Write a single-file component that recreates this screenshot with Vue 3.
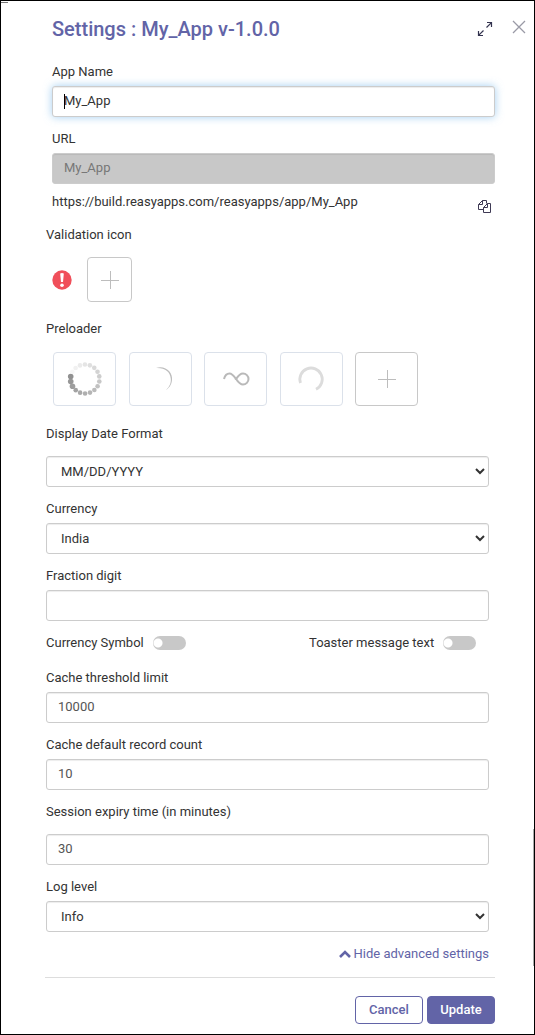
<script setup>
import { ref } from 'vue'

const appName = ref('My_App')
const dateFormat = ref('MM/DD/YYYY')
const currency = ref('India')
const fraction = ref('')
const showSymbol = ref(false)
const toaster = ref(false)
const threshold = ref('10000')
const recordCount = ref('10')
const expiry = ref('30')
const logLevel = ref('Info')

const dots = Array.from({ length: 18 }, (_, i) => {
  const angle = Math.PI + 0.17 - (i * 2 * Math.PI) / 18
  return {
    x: 16 + 14.5 * Math.cos(angle),
    y: 16 + 14.5 * Math.sin(angle),
    r: i < 3 ? 2.8 : 2.3,
    shade: `rgb(${Array(3).fill(Math.round(145 + i * 6)).join(',')})`,
  }
})
</script>

<template>
  <main class="dialog">
    <span class="edge-mark" aria-hidden="true"></span>
    <span class="scroll-mark" aria-hidden="true"></span>
    <header class="head">
      <h1>Settings : My_App v-1.0.0</h1>
      <button type="button" class="icon-btn expand" aria-label="Expand">
        <svg width="16" height="16" viewBox="0 0 16 16" fill="none" stroke="#33334f" stroke-width="1.2">
          <path d="M10 1.5h4.5V6M14.2 1.8 9.500 6.500M1.5 10v4.500H6M1.8 14.2 6.500 9.500" />
        </svg>
      </button>
      <button type="button" class="icon-btn close" aria-label="Close">
        <svg width="14" height="14" viewBox="0 0 14 14" fill="none" stroke="#9a9aa6" stroke-width="1.3">
          <path d="M1 1l12 12M13 1 1 13" />
        </svg>
      </button>
    </header>

    <form class="body" @submit.prevent>
      <section class="identity">
        <div class="field">
          <label for="name">App Name</label>
          <div class="caret-box">
            <input id="name" v-model="appName" class="control active" type="text" />
          </div>
        </div>
        <div class="field">
          <label for="url">URL</label>
          <input id="url" class="control" type="text" value="My_App" disabled />
        </div>
        <div class="link-row">
          <span>https://build.reasyapps.com/reasyapps/app/My_App</span>
          <button type="button" class="icon-btn" aria-label="Copy URL">
            <svg width="14" height="14" viewBox="0 0 14 14" fill="none" stroke="#3f3a55" stroke-width="1">
              <path d="M5.5 9.5h-5v-5l4-4h4v3M4.5 .5v4h-4M5.5 7.5v5h7v-9h-3l-4 4h4v-4" />
            </svg>
          </button>
        </div>
      </section>

      <section class="advanced">
        <div class="group-label">Validation icon</div>
        <div class="validation">
          <svg width="20" height="20" viewBox="0 0 20 20">
            <circle cx="10" cy="10" r="9.7" fill="#f04f5a" />
            <path d="M8.2 3.4Q10 2.6 11.8 3.4L11 12H9z" fill="#fff" />
            <circle cx="10" cy="15.3" r="1.8" fill="#fff" />
          </svg>
          <button type="button" class="tile add small" aria-label="Add validation icon">
            <svg width="18" height="18" viewBox="0 0 18 18" stroke="#bdbdbd"><path d="M9.5 0v18M0 9.5h18" /></svg>
          </button>
        </div>

        <div class="group-label">Preloader</div>
        <div class="loaders">
          <button type="button" class="tile" aria-label="Dots preloader">
            <svg width="36" height="36" viewBox="-2 -2 36 36">
              <circle v-for="(d, i) in dots" :key="i" :cx="d.x" :cy="d.y" :r="d.r" :fill="d.shade" />
            </svg>
          </button>
          <button type="button" class="tile" aria-label="Crescent preloader">
            <svg width="28" height="28" viewBox="0 0 28 28">
              <path d="M10 3C20 0 27 8 26 15C25.5 20 23 23 20 25C24 21 25 18 24.8 14C24.5 7 19 2.5 10 3z" fill="#bdbdbd" />
            </svg>
          </button>
          <button type="button" class="tile" aria-label="Infinity preloader">
            <svg width="28" height="16" viewBox="0 0 28 16" fill="none" stroke="#b9b9b9" stroke-width="2">
              <path d="M2 8C3 4 5 2.5 7.5 2.5C13 2.5 15 13.5 21 13.5A5.500 5.500 0 0 0 21 2.500C17 2.500 15.500 6 13.500 9" />
            </svg>
          </button>
          <button type="button" class="tile" aria-label="Ring preloader">
            <svg width="28" height="28" viewBox="0 0 28 28" fill="none" stroke="#dcdcdc" stroke-width="2.8">
              <path d="M3.5 18A11.2 11.2 0 1 1 19 24.3" />
            </svg>
          </button>
          <button type="button" class="tile add" aria-label="Add preloader">
            <svg width="18" height="18" viewBox="0 0 18 18" stroke="#bdbdbd"><path d="M9.5 0v18M0 9.5h18" /></svg>
          </button>
        </div>

        <div class="field spaced">
          <label for="date">Display Date Format</label>
          <select id="date" v-model="dateFormat" class="control"><option>MM/DD/YYYY</option></select>
        </div>
        <div class="field">
          <label for="currency">Currency</label>
          <select id="currency" v-model="currency" class="control"><option>India</option></select>
        </div>
        <div class="field">
          <label for="fraction">Fraction digit</label>
          <input id="fraction" v-model="fraction" class="control" type="text" />
        </div>
        <div class="switches">
          <label>Currency Symbol <input v-model="showSymbol" type="checkbox" class="switch" /></label>
          <label>Toaster message text <input v-model="toaster" type="checkbox" class="switch" /></label>
        </div>
        <div class="field">
          <label for="threshold">Cache threshold limit</label>
          <input id="threshold" v-model="threshold" class="control" type="text" />
        </div>
        <div class="field">
          <label for="records">Cache default record count</label>
          <input id="records" v-model="recordCount" class="control" type="text" />
        </div>
        <div class="field spaced">
          <label for="expiry">Session expiry time (in minutes)</label>
          <input id="expiry" v-model="expiry" class="control" type="text" />
        </div>
        <div class="field">
          <label for="log">Log level</label>
          <select id="log" v-model="logLevel" class="control"><option>Info</option></select>
        </div>
        <a href="#" class="toggle-link" @click.prevent>
          <svg width="12" height="8" viewBox="0 0 12 8" fill="none" stroke="#6264a7" stroke-width="2.6">
            <path d="M1 7l5-5 5 5" />
          </svg>
          <span>Hide advanced settings</span>
        </a>
      </section>

      <footer class="actions">
        <button type="button" class="btn">Cancel</button>
        <button type="submit" class="btn primary">Update</button>
      </footer>
    </form>
  </main>
</template>

<style>
body {
  background: #fff;
}
</style>

<style scoped>
* {
  box-sizing: border-box;
}
.dialog {
  position: relative;
  min-height: 100vh;
  border: 1px solid #000;
  color: #333;
  font: 13px/20px Roboto, sans-serif;
}
.edge-mark {
  position: absolute;
  top: 1px;
  left: 0;
  width: 7px;
  height: 1px;
  background: #777;
}
.scroll-mark {
  position: absolute;
  right: 0;
  bottom: 68px;
  width: 1px;
  height: 137px;
  background: #aaa;
}
button,
input,
select {
  font: inherit;
  margin: 0;
}
button {
  cursor: pointer;
}
.head {
  display: flex;
  align-items: center;
  padding: 12px 8px 0 51px;
}
h1 {
  flex: 1;
  margin: 0;
  font-size: 20px;
  line-height: 32px;
  font-weight: 500;
  color: #6264a7;
}
.icon-btn {
  display: flex;
  padding: 0;
  border: 0;
  background: none;
}
.close {
  margin: 0 0 4px 19px;
}
.body {
  padding: 17px 39px 10px 44px;
}
.identity {
  padding-left: 7px;
}
.advanced {
  padding: 0 6px 0 1px;
}
.field {
  display: flex;
  flex-direction: column;
  gap: 4px;
  margin-bottom: 12px;
}
.field.spaced {
  gap: 12px;
}
.control {
  width: 100%;
  height: 31px;
  padding: 4px 11px 6px;
  border: 1px solid #ccc;
  border-radius: 3px;
  background-color: #fff;
  box-shadow: inset 0 1px 1px rgba(0, 0, 0, 0.075);
  color: #555;
  outline: 0;
}
select.control {
  padding: 4px 10px;
  color: #333;
}
.control:disabled {
  background: #c8c8c8;
  color: #777;
}
.control.active {
  color: #333;
  box-shadow: inset 0 1px 1px rgba(0, 0, 0, 0.075), 0 0 8px rgba(102, 175, 233, 0.6);
}
.caret-box {
  position: relative;
}
.caret-box::after {
  content: '';
  position: absolute;
  left: 12px;
  top: 8px;
  width: 1px;
  height: 15px;
  background: #000;
}
.link-row {
  display: flex;
  justify-content: space-between;
  align-items: flex-start;
  margin: -4px 3px 11px 0;
}
.link-row .icon-btn {
  margin-top: 8px;
}
.validation {
  display: flex;
  align-items: center;
  gap: 15px;
  margin: 12px 0 17px 6px;
}
.tile {
  display: flex;
  align-items: center;
  justify-content: center;
  width: 63px;
  height: 54px;
  padding: 0;
  border: 1px solid #dbe1ea;
  border-radius: 4px;
  background: #fff;
}
.tile.add {
  border-color: #c8c8c8;
}
.tile.small {
  width: 45px;
  height: 45px;
}
.loaders {
  display: flex;
  align-items: center;
  justify-content: space-between;
  max-width: 365px;
  margin: 13px 0 18px 7px;
}
.switches {
  display: grid;
  grid-template-columns: 263px 1fr;
  margin-bottom: 15px;
}
.switches label {
  display: flex;
  align-items: center;
  gap: 9px;
}
.switch {
  appearance: none;
  width: 33px;
  height: 14px;
  border-radius: 7px;
  background: radial-gradient(circle at 5px 7px, #fff 4px, #c8c8c8 5px);
}
.switch:checked {
  background: radial-gradient(circle at 28px 7px, #fff 4px, #6264a7 5px);
}
.toggle-link {
  display: flex;
  align-items: center;
  justify-content: flex-end;
  gap: 3px;
  color: #6264a7;
  text-decoration: none;
}
.actions {
  display: flex;
  justify-content: flex-end;
  gap: 4px;
  margin-top: 13px;
  padding-top: 18px;
  border-top: 1px solid #ddd;
}
.btn {
  width: 68px;
  height: 28px;
  padding: 0;
  border: 1px solid #6264a7;
  border-radius: 4px;
  background: #fff;
  color: #6264a7;
  font-weight: 500;
}
.btn.primary {
  background: #6264a7;
  color: #fff;
}
</style>
